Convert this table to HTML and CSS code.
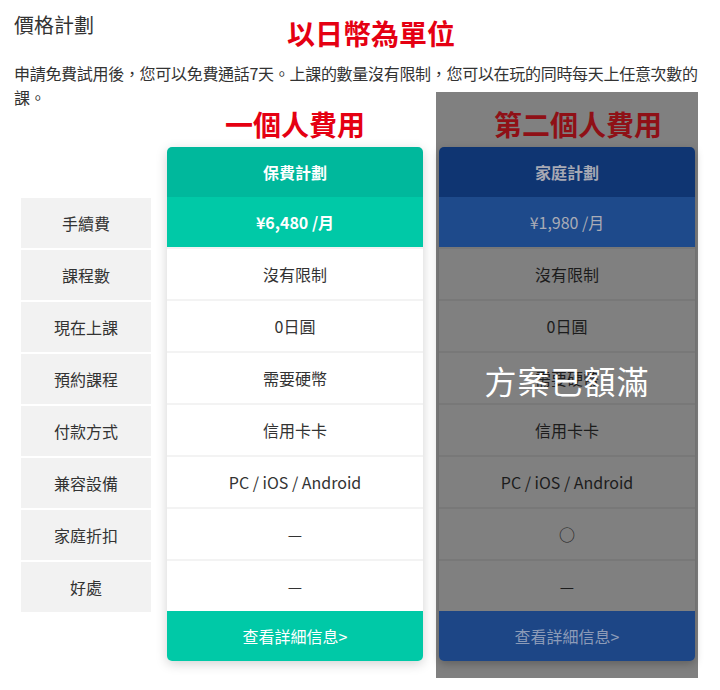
FILE: index.html
```html
<!DOCTYPE html>
<html>
<head>
    <meta charset="utf-8">
    <title>價格計劃</title>
    <link rel="stylesheet" href="styles.css">
</head>
<body>
    <div class="top">
        <h2 class="title">價格計劃</h2>
        <div class="note">以日幣為單位</div>
    </div>
    <p class="intro">申請免費試用後，您可以免費通話7天。上課的數量沒有限制，您可以在玩的同時每天上任意次數的課。</p>

    <div class="plans">
        <div class="labels">
            <div class="label">手續費</div>
            <div class="label">課程數</div>
            <div class="label">現在上課</div>
            <div class="label">預約課程</div>
            <div class="label">付款方式</div>
            <div class="label">兼容設備</div>
            <div class="label">家庭折扣</div>
            <div class="label">好處</div>
        </div>

        <div class="plan">
            <div class="plan-note">一個人費用</div>
            <div class="card">
                <div class="card-head">保費計劃</div>
                <div class="card-price">¥6,480 /月</div>
                <div class="card-row">沒有限制</div>
                <div class="card-row">0日圓</div>
                <div class="card-row">需要硬幣</div>
                <div class="card-row">信用卡卡</div>
                <div class="card-row">PC / iOS / Android</div>
                <div class="card-row">—</div>
                <div class="card-row">—</div>
                <div class="card-foot">查看詳細信息&gt;</div>
            </div>
        </div>

        <div class="plan full">
            <div class="plan-note">第二個人費用</div>
            <div class="card">
                <div class="card-head">家庭計劃</div>
                <div class="card-price">¥1,980 /月</div>
                <div class="card-row">沒有限制</div>
                <div class="card-row">0日圓</div>
                <div class="card-row">需要硬幣</div>
                <div class="card-row">信用卡卡</div>
                <div class="card-row">PC / iOS / Android</div>
                <div class="card-row">○</div>
                <div class="card-row">—</div>
                <div class="card-foot">查看詳細信息&gt;</div>
            </div>
            <div class="full-mark">方案已額滿</div>
        </div>
    </div>
</body>
</html>
```

FILE: styles.css
```css
body {
    font-family: "Noto Sans CJK TC", "Noto Sans", sans-serif;
    margin: 0;
    padding: 11px 14px 0;
    color: #333;
    background-color: white;
}
.top {
    display: flex;
    align-items: flex-start;
}
.title {
    margin: 0;
    font-size: 20px;
    font-weight: normal;
    line-height: 28px;
    color: #333;
}
.note {
    margin: 4px 0 0 193px;
    font-size: 28px;
    font-weight: bold;
    line-height: 36px;
    color: #e50012;
}
.intro {
    margin: 10px 0 0;
    font-size: 16px;
    line-height: 24px;
    letter-spacing: -0.3px;
}
.plans {
    display: flex;
    align-items: flex-start;
    margin-top: -17px;
}
.labels {
    width: 130px;
    margin-left: 7px;
    padding-top: 106px;
}
.label {
    height: 50px;
    margin-bottom: 2px;
    line-height: 50px;
    text-align: center;
    font-size: 16px;
    background-color: #f2f2f2;
}
.plan {
    position: relative;
    width: 256px;
    margin-left: 13px;
    padding: 0 3px 17px;
}
.plan.full {
    margin-left: 10px;
    background-color: #808080;
}
.plan-note {
    box-sizing: border-box;
    height: 55px;
    padding-top: 18px;
    font-size: 28px;
    font-weight: bold;
    line-height: 28px;
    text-align: center;
    color: #e50012;
}
.full .plan-note {
    padding-left: 22px;
    color: #8f1016;
}
.card {
    border-radius: 5px;
    overflow: hidden;
    text-align: center;
    font-size: 16px;
    background-color: white;
    box-shadow: 0 3px 12px rgba(0,0,0,0.18);
}
.card-head, .card-price, .card-foot {
    height: 50px;
    line-height: 50px;
    color: white;
}
.card-head {
    font-weight: bold;
    background-color: #00b89c;
}
.card-price {
    font-weight: bold;
    background-color: #00c9a7;
}
.card-row {
    box-sizing: border-box;
    height: 52px;
    line-height: 50px;
    border-top: 2px solid #f3f3f3;
    color: #333;
}
.card-foot {
    background-color: #00c9a7;
}
.full .card {
    background-color: #808080;
    box-shadow: 0 3px 8px rgba(0,0,0,0.25);
}
.full .card-head {
    background-color: #0f3572;
    color: #a7a9b4;
}
.full .card-price {
    background-color: #1e4a8b;
    color: #a9acb6;
    font-weight: normal;
}
.full .card-row {
    border-top-color: #787878;
    color: #1c1c1c;
}
.full .card-foot {
    background-color: #1d4686;
    color: #8c9bb8;
}
.full-mark {
    position: absolute;
    left: 0;
    right: 0;
    top: 268px;
    font-size: 32px;
    line-height: 40px;
    text-align: center;
    color: white;
    letter-spacing: 1px;
}
```
